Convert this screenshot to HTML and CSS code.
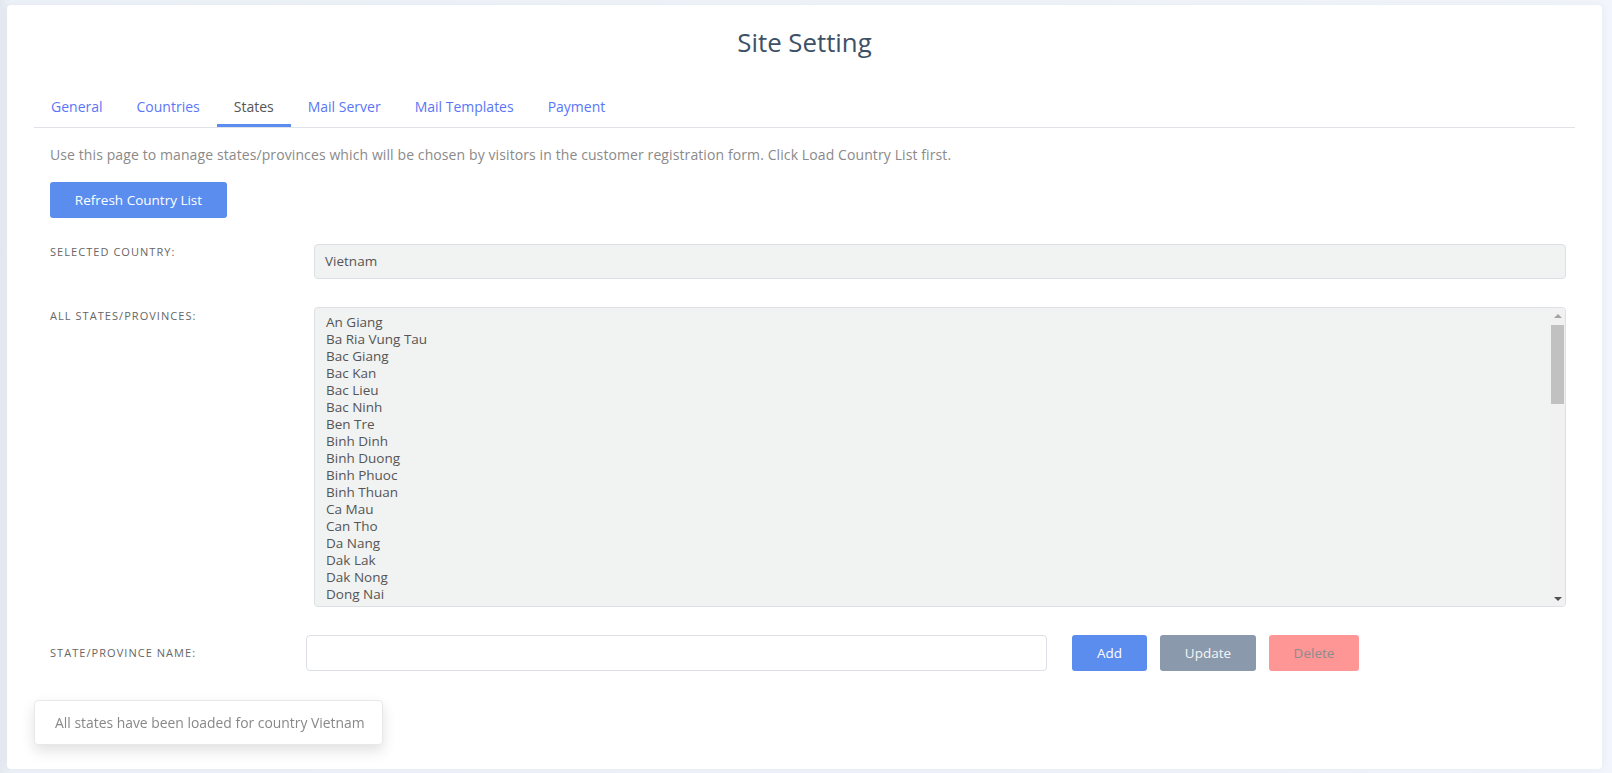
FILE: index.html
```html
<!DOCTYPE html>
<html lang="en">
<head>
<meta charset="utf-8">
<title>Site Setting</title>
<link rel="stylesheet" href="styles.css">
</head>
<body>
<div class="card">
  <h1 class="title">Site Setting</h1>
  <nav class="tabs">
    <a class="tab">General</a>
    <a class="tab">Countries</a>
    <a class="tab active">States</a>
    <a class="tab">Mail Server</a>
    <a class="tab">Mail Templates</a>
    <a class="tab">Payment</a>
  </nav>
  <div class="content">
    <p class="desc">Use this page to manage states/provinces which will be chosen by visitors in the customer registration form. Click Load Country List first.</p>
    <button class="btn btn-primary btn-refresh">Refresh Country List</button>
    <div class="row row-country">
      <label class="label">Selected Country:</label>
      <div class="field readonly">Vietnam</div>
    </div>
    <div class="row row-list">
      <label class="label label-top">All States/Provinces:</label>
      <div class="listbox-wrap">
        <div class="listbox">
          <div class="opt">An Giang</div>
          <div class="opt">Ba Ria Vung Tau</div>
          <div class="opt">Bac Giang</div>
          <div class="opt">Bac Kan</div>
          <div class="opt">Bac Lieu</div>
          <div class="opt">Bac Ninh</div>
          <div class="opt">Ben Tre</div>
          <div class="opt">Binh Dinh</div>
          <div class="opt">Binh Duong</div>
          <div class="opt">Binh Phuoc</div>
          <div class="opt">Binh Thuan</div>
          <div class="opt">Ca Mau</div>
          <div class="opt">Can Tho</div>
          <div class="opt">Da Nang</div>
          <div class="opt">Dak Lak</div>
          <div class="opt">Dak Nong</div>
          <div class="opt">Dong Nai</div>
        </div>
        <div class="scrollbar">
          <span class="sb-btn"><span class="arrow-up"></span></span>
          <span class="sb-thumb"></span>
          <span class="sb-track"></span>
          <span class="sb-btn"><span class="arrow-down"></span></span>
        </div>
      </div>
    </div>
    <div class="row row-name">
      <label class="label label-name">State/Province Name:</label>
      <input class="field name-input" type="text">
      <div class="actions">
        <button class="btn btn-primary btn-add">Add</button>
        <button class="btn btn-secondary btn-update">Update</button>
        <button class="btn btn-danger btn-delete">Delete</button>
      </div>
    </div>
  </div>
</div>
<div class="toast">All states have been loaded for country Vietnam</div>
</body>
</html>
```
FILE: styles.css
```css
* { box-sizing: border-box; }
html, body { margin: 0; padding: 0; }
body {
  background: linear-gradient(90deg, #e3e7f0 0, #eef2f9 12px, #f2f5fb 100%);
  font-family: "Open Sans", Lato, sans-serif;
  color: #555;
  height: 773px;
  overflow: hidden;
}
.card {
  margin: 5px 10px 0 7px;
  height: 764px;
  background: #fff;
  border-radius: 4px;
  box-shadow: 0 0 8px rgba(40, 60, 100, 0.06);
  padding: 22px 27px 0;
}
.title {
  margin: 0;
  text-align: center;
  font-size: 25.8px;
  line-height: 30px;
  font-weight: 400;
  color: #3d5166;
}
.tabs {
  display: flex;
  margin-top: 32px;
  border-bottom: 1px solid #dfe2e6;
}
.tab {
  padding: 8px 17px 7px;
  line-height: 20px;
  font-size: 14px;
  color: #5a76f6;
  border-bottom: 3px solid transparent;
  cursor: pointer;
}
.tab.active {
  color: #555;
  border-bottom-color: #5b8def;
}
.content { padding: 0 9px 0 16px; }
.desc {
  margin: 17px 0 0;
  font-size: 14px;
  letter-spacing: 0.1px;
  line-height: 20px;
  color: #8a8a8a;
}
.btn {
  font-family: inherit;
  font-size: 13.5px;
  border: none;
  border-radius: 3px;
  height: 36px;
  padding: 0;
  cursor: pointer;
}
.btn-primary { background: #5b8def; color: #fff; }
.btn-secondary { background: #8a99ab; color: #f4f6f8; }
.btn-danger { background: #fe9696; color: #8c8c8c; }
.btn-refresh { margin-top: 17px; width: 177px; }
.row { display: flex; }
.row-country { margin-top: 26px; }
.row-list { margin-top: 28px; }
.row-name { margin-top: 28px; align-items: center; }
.label {
  flex: 0 0 264px;
  font-size: 11px;
  line-height: 14px;
  padding-top: 1px;
  text-transform: uppercase;
  color: #666;
  letter-spacing: 1.05px;
}
.label-top { padding-top: 2px; }
.label-name { flex-basis: 256px; padding-top: 0; }
.field {
  flex: 1;
  height: 35px;
  border: 1px solid #dcdfe3;
  border-radius: 4px;
  font-family: inherit;
  font-size: 13.5px;
  color: #555;
}
.readonly {
  background: #f1f2f2;
  padding: 0 10px;
  line-height: 33px;
}
.listbox-wrap {
  flex: 1;
  height: 300px;
  position: relative;
  background: #f1f2f2;
  border: 1px solid #dcdfe3;
  border-radius: 4px;
  overflow: hidden;
}
.listbox {
  height: 100%;
  overflow: hidden;
  padding: 6px 26px 0 11px;
  font-size: 13.5px;
  line-height: 17px;
  color: #555;
}
.scrollbar {
  position: absolute;
  top: 0;
  right: 0;
  bottom: 0;
  width: 15px;
  background: #f1f1f1;
  display: flex;
  flex-direction: column;
}
.sb-btn {
  height: 15px;
  flex: 0 0 15px;
  display: flex;
  align-items: center;
  justify-content: center;
}
.arrow-up {
  width: 0;
  height: 0;
  border-left: 4px solid transparent;
  border-right: 4px solid transparent;
  border-bottom: 4px solid #a3a3a3;
}
.arrow-down {
  width: 0;
  height: 0;
  border-left: 4px solid transparent;
  border-right: 4px solid transparent;
  border-top: 4px solid #505050;
}
.sb-thumb {
  flex: 0 0 79px;
  margin: 2px 1px 0;
  background: #c1c1c1;
}
.sb-track { flex: 1; }
.name-input {
  flex: 0 0 741px;
  height: 36px;
  background: #fff;
  outline: none;
}
.actions {
  display: flex;
  gap: 13px;
  margin-left: 25px;
}
.btn-add { width: 75px; }
.btn-update { width: 96px; }
.btn-delete { width: 90px; }
.toast {
  position: fixed;
  left: 34px;
  top: 700px;
  width: 349px;
  height: 45px;
  padding: 0 20px;
  line-height: 43px;
  background: #fff;
  border: 1px solid #e6e8eb;
  border-radius: 4px;
  box-shadow: 0 6px 14px rgba(0, 0, 0, 0.12);
  font-size: 13.9px;
  color: #888;
  white-space: nowrap;
}
```
